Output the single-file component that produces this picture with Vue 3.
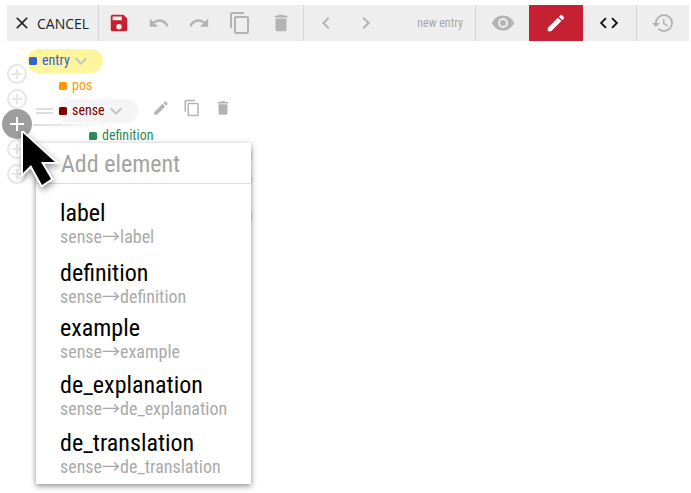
<script setup>
const items = [
  ['label', 'label', 'a'],
  ['definition', 'definition', 'b'],
  ['example', 'example', 'c'],
  ['de_explanation', 'de_explanation', 'd'],
  ['de_translation', 'de_translation', 'e'],
]
</script>

<template>
  <div class="page">
    <header class="toolbar">
      <button class="cancel">
        <svg class="x" viewBox="0 0 24 24"><path d="M19 6.400 17.600 5 12 10.600 6.400 5 5 6.400 10.600 12 5 17.600 6.400 19 12 13.400 17.600 19 19 17.600 13.400 12z"/></svg>
        <span>CANCEL</span>
      </button>
      <div class="group edit">
        <svg class="ic red" viewBox="0 0 24 24"><path d="M17 3H5a2 2 0 0 0-2 2v14a2 2 0 0 0 2 2h14a2 2 0 0 0 2-2V7l-4-4zm-5 16a3 3 0 1 1 0-6 3 3 0 0 1 0 6zm3-10H5V5h10v4z"/></svg>
        <svg class="ic" viewBox="0 0 24 24"><path d="M12.500 8c-2.650 0-5.050.99-6.900 2.600L2 7v9h9l-3.620-3.620c1.390-1.160 3.160-1.880 5.120-1.880 3.540 0 6.550 2.310 7.600 5.500l2.370-.78C21.080 11.030 17.150 8 12.500 8z"/></svg>
        <svg class="ic" viewBox="0 0 24 24"><path d="M18.400 10.600C16.550 8.990 14.150 8 11.500 8c-4.650 0-8.580 3.030-9.960 7.220L3.900 16c1.050-3.190 4.050-5.500 7.600-5.500 1.950 0 3.730.72 5.120 1.880L13 16h9V7l-3.600 3.600z"/></svg>
        <svg class="ic big" viewBox="0 0 24 24"><path d="M16 1H4a2 2 0 0 0-2 2v14h2V3h12V1zm3 4H8a2 2 0 0 0-2 2v14c0 1.100.9 2 2 2h11a2 2 0 0 0 2-2V7a2 2 0 0 0-2-2zm0 16H8V7h11v14z"/></svg>
        <svg class="ic" viewBox="0 0 24 24"><path d="M6 19c0 1.100.9 2 2 2h8a2 2 0 0 0 2-2V7H6v12zM19 4h-3.500l-1-1h-5l-1 1H5v2h14V4z"/></svg>
      </div>
      <div class="group nav">
        <svg class="chev" viewBox="0 0 24 24"><path d="M15.400 7.400 14 6l-6 6 6 6 1.400-1.400-4.600-4.600z"/></svg>
        <svg class="chev next" viewBox="0 0 24 24"><path d="M10 6 8.600 7.400l4.600 4.600-4.600 4.600L10 18l6-6z"/></svg>
        <span class="new">new entry</span>
      </div>
      <div class="group views">
        <span class="view"><svg class="ic wide" viewBox="0 0 24 24"><path d="M12 4.500C7 4.500 2.700 7.600 1 12c1.700 4.400 6 7.500 11 7.500s9.300-3.100 11-7.500c-1.700-4.400-6-7.500-11-7.500zM12 17a5 5 0 1 1 0-10 5 5 0 0 1 0 10zm0-8a3 3 0 1 0 0 6 3 3 0 0 0 0-6z"/></svg></span>
        <span class="view active"><svg class="ic white" viewBox="0 0 24 24"><path d="M3 17.250V21h3.750L17.800 9.940l-3.750-3.750L3 17.250zM20.700 7.040a1 1 0 0 0 0-1.410l-2.340-2.340a1 1 0 0 0-1.410 0l-1.830 1.830 3.750 3.750 1.830-1.830z"/></svg></span>
        <span class="view"><svg class="ic dark" viewBox="0 0 24 24"><path d="M9.400 16.600 4.800 12l4.600-4.600L8 6l-6 6 6 6 1.400-1.400zm5.200 0 4.600-4.600-4.600-4.600L16 6l6 6-6 6-1.400-1.400z"/></svg></span>
      </div>
      <div class="group last">
        <svg class="ic big" viewBox="0 0 24 24"><path d="M13 3a9 9 0 0 0-9 9H1l3.890 3.890.07.140L9 12H6c0-3.870 3.130-7 7-7s7 3.130 7 7-3.130 7-7 7c-1.930 0-3.680-.79-4.940-2.060l-1.420 1.420A8.954 8.954 0 0 0 13 21a9 9 0 0 0 0-18zm-1 5v5l4.280 2.540.72-1.210-3.500-2.080V8H12z"/></svg>
      </div>
    </header>

    <main class="canvas">
      <div class="gutter">
        <span class="add"></span>
        <span class="add"></span>
        <span class="add on"></span>
        <span class="add"></span>
        <span class="add"></span>
      </div>
      <div class="tree">
        <div class="row">
          <span class="pill yellow"><i class="dot blue"></i><b class="blue-t">entry</b>
            <svg class="caret" viewBox="0 0 24 24"><path d="M16.600 8.600 12 13.200 7.400 8.600 6 10l6 6 6-6z"/></svg>
          </span>
        </div>
        <div class="row lvl1"><span class="pill"><i class="dot orange"></i><b class="orange-t">pos</b></span></div>
        <div class="row lvl1 sense">
          <span class="grip"></span>
          <span class="pill grey"><i class="dot maroon"></i><b class="maroon-t">sense</b>
            <svg class="caret" viewBox="0 0 24 24"><path d="M16.600 8.600 12 13.200 7.400 8.600 6 10l6 6 6-6z"/></svg>
          </span>
          <span class="tools">
            <svg viewBox="0 0 24 24"><path d="M3 17.250V21h3.750L17.800 9.940l-3.750-3.750L3 17.250zM20.700 7.040a1 1 0 0 0 0-1.410l-2.340-2.340a1 1 0 0 0-1.410 0l-1.830 1.830 3.750 3.750 1.830-1.830z"/></svg>
            <svg viewBox="0 0 24 24"><path d="M16 1H4a2 2 0 0 0-2 2v14h2V3h12V1zm3 4H8a2 2 0 0 0-2 2v14c0 1.100.9 2 2 2h11a2 2 0 0 0 2-2V7a2 2 0 0 0-2-2zm0 16H8V7h11v14z"/></svg>
            <svg viewBox="0 0 24 24"><path d="M6 19c0 1.100.9 2 2 2h8a2 2 0 0 0 2-2V7H6v12zM19 4h-3.500l-1-1h-5l-1 1H5v2h14V4z"/></svg>
          </span>
          <span class="rule"></span>
        </div>
        <div class="row lvl2"><span class="pill"><i class="dot green"></i><b class="green-t">definition</b></span></div>
      </div>
    </main>

    <span class="ghost g1"></span>
    <span class="ghost g2"></span>
    <span class="ghost g3"></span>

    <section class="menu">
      <div class="menu-head">Add element</div>
      <ul class="list">
        <li v-for="it in items" :key="it[0]" :class="it[2]">
          <div class="name">{{ it[0] }}</div>
          <div class="path">sense<span class="arrow">→</span>{{ it[1] }}</div>
        </li>
      </ul>
    </section>

    <svg class="cursor" viewBox="0 0 44 64" width="44" height="64">
      <path d="M5 2 V42 L13 34 L24 54 L33 48 L23 31 L37 31 Z" fill="#000" stroke="#fff" stroke-width="4" stroke-linejoin="miter" paint-order="stroke"/>
    </svg>
  </div>
</template>

<style scoped>
.page { position: relative; width: 691px; height: 493px; background: #fff; overflow: hidden; font-family: Roboto, "Liberation Sans", sans-serif; font-stretch: 75%; }
.toolbar { position: absolute; left: 7px; top: 5px; width: 682px; height: 36px; background: #eee; display: flex; align-items: center; }
.cancel { width: 92px; height: 36px; border: 0; border-right: 1px solid #d6d6d6; background: none; display: flex; align-items: center; gap: 7px; padding: 0 0 0 7px; font: 14px "Open Sans", Roboto, sans-serif; color: #222; }
.x { width: 16px; height: 16px; transform: scale(1.25); fill: #222; }
.group { height: 36px; display: flex; align-items: center; border-right: 1px solid #d6d6d6; }
.edit { width: 205px; padding-left: 9px; gap: 18px; box-sizing: border-box; }
.nav { width: 172px; box-sizing: border-box; padding-left: 10px; }
.views { width: 160px; }
.last { border: 0; flex: 1; justify-content: center; }
.ic { width: 22px; height: 22px; fill: #b3b3b3; flex: none; }
.big { width: 24px; height: 24px; }
.red { fill: #c62033; }
.white { fill: #fff; }
.dark { fill: #111; }
.chev { width: 24px; height: 24px; fill: #b3b3b3; }
.next { margin-left: 16px; }
.new { margin-left: auto; margin-right: 12px; font-size: 12px; color: #a8a8a8; }
.view { flex: 1; height: 36px; display: flex; align-items: center; justify-content: center; }
.active { background: #c62033; }
.wide { width: 24px; height: 24px; }

.canvas { position: absolute; left: 0; top: 49px; display: flex; }
.gutter { width: 28px; padding-top: 12px; display: flex; flex-direction: column; align-items: center; box-sizing: border-box; margin-left: 3px; }
.add { width: 20px; height: 20px; margin: 2.500px 0; border: 2px solid #e6e6e6; border-radius: 50%; box-sizing: border-box; position: relative; flex: none; }
.add::before, .add::after { content: ""; position: absolute; background: #e6e6e6; left: 3px; right: 3px; top: 7px; height: 2px; }
.add::after { left: 7px; width: 2px; right: auto; top: 3px; bottom: 3px; height: auto; }
.add.on { width: 30px; height: 30px; margin: -2.500px 0; background: #9e9e9e; border: 0; z-index: 2; }
.on::before, .on::after { background: #fff; left: 8px; right: 8px; top: 14px; }
.on::after { left: 14px; top: 8px; bottom: 8px; width: 2px; right: auto; }
.tree { width: 300px; margin-left: -4px; }
.row { height: 25px; display: flex; align-items: flex-start; }
.lvl1 { padding-left: 30px; }
.lvl2 { padding-left: 60px; }
.sense { position: relative; }
.pill { height: 24px; box-sizing: border-box; display: inline-flex; align-items: center; padding: 0 6px 2px 2px; border-radius: 12px; }
.yellow { background: #fff59d; width: 76px; }
.grey { background: #f5f5f5; width: 81px; }
.dot { width: 8px; height: 8px; border-radius: 1.500px; margin: 2px 5px 0 0; flex: none; }
b { font-weight: 400; font-size: 14px; }
.blue { background: #3366cc; } .blue-t { color: #3366cc; }
.orange { background: #ff9800; } .orange-t { color: #ff9800; }
.maroon { background: #800000; } .maroon-t { color: #800000; }
.green { background: #2e8b57; } .green-t { color: #2e8b57; }
.caret { width: 24px; height: 24px; fill: #c4c4c4; margin: 2px 0 0 -1px; flex: none; }
.grip { position: absolute; left: 9px; top: 9px; width: 17px; height: 2px; border-top: 2px solid #ddd; border-bottom: 2px solid #ddd; }
.tools { display: flex; gap: 13px; margin-left: 14px; }
.tools svg { width: 18px; height: 18px; fill: #b3b3b3; }
.rule { position: absolute; left: 6px; top: 25px; width: 75px; height: 2px; background: linear-gradient(to right, #dcdcdc, rgba(220,220,220,0)); }

.ghost { position: absolute; left: 235px; width: 18px; background: #e8e8e8; border-radius: 0 8px 8px 0; }
.g1 { top: 148px; height: 15px; }
.g2 { top: 173px; height: 12px; }
.g3 { top: 208px; height: 17px; }

.menu { position: absolute; left: 36px; top: 143px; width: 215px; height: 341px; background: #fff; box-shadow: 0 2px 6px rgba(0,0,0,.45); z-index: 3; }
.menu-head { height: 40px; line-height: 42px; padding-left: 25px; font-size: 24px; color: #a3a3a3; border-bottom: 1px solid #ddd; }
.list { list-style: none; margin: 0; padding: 0 0 0 24px; }
.list li { position: absolute; left: 24px; }
.a { top: 56px; } .b { top: 116px; } .c { top: 171px; } .d { top: 228px; } .e { top: 286px; }
.name { font-size: 24px; line-height: 28px; color: #000; }
.path { font-size: 18px; line-height: 20px; height: 20px; color: #aaa; }
.arrow { font-family: "Noto Sans CJK JP", sans-serif; font-stretch: normal; line-height: 0; }
.cursor { position: absolute; left: 18px; top: 131px; z-index: 5; filter: drop-shadow(1px 3px 3px rgba(0,0,0,.4)); }
</style>
